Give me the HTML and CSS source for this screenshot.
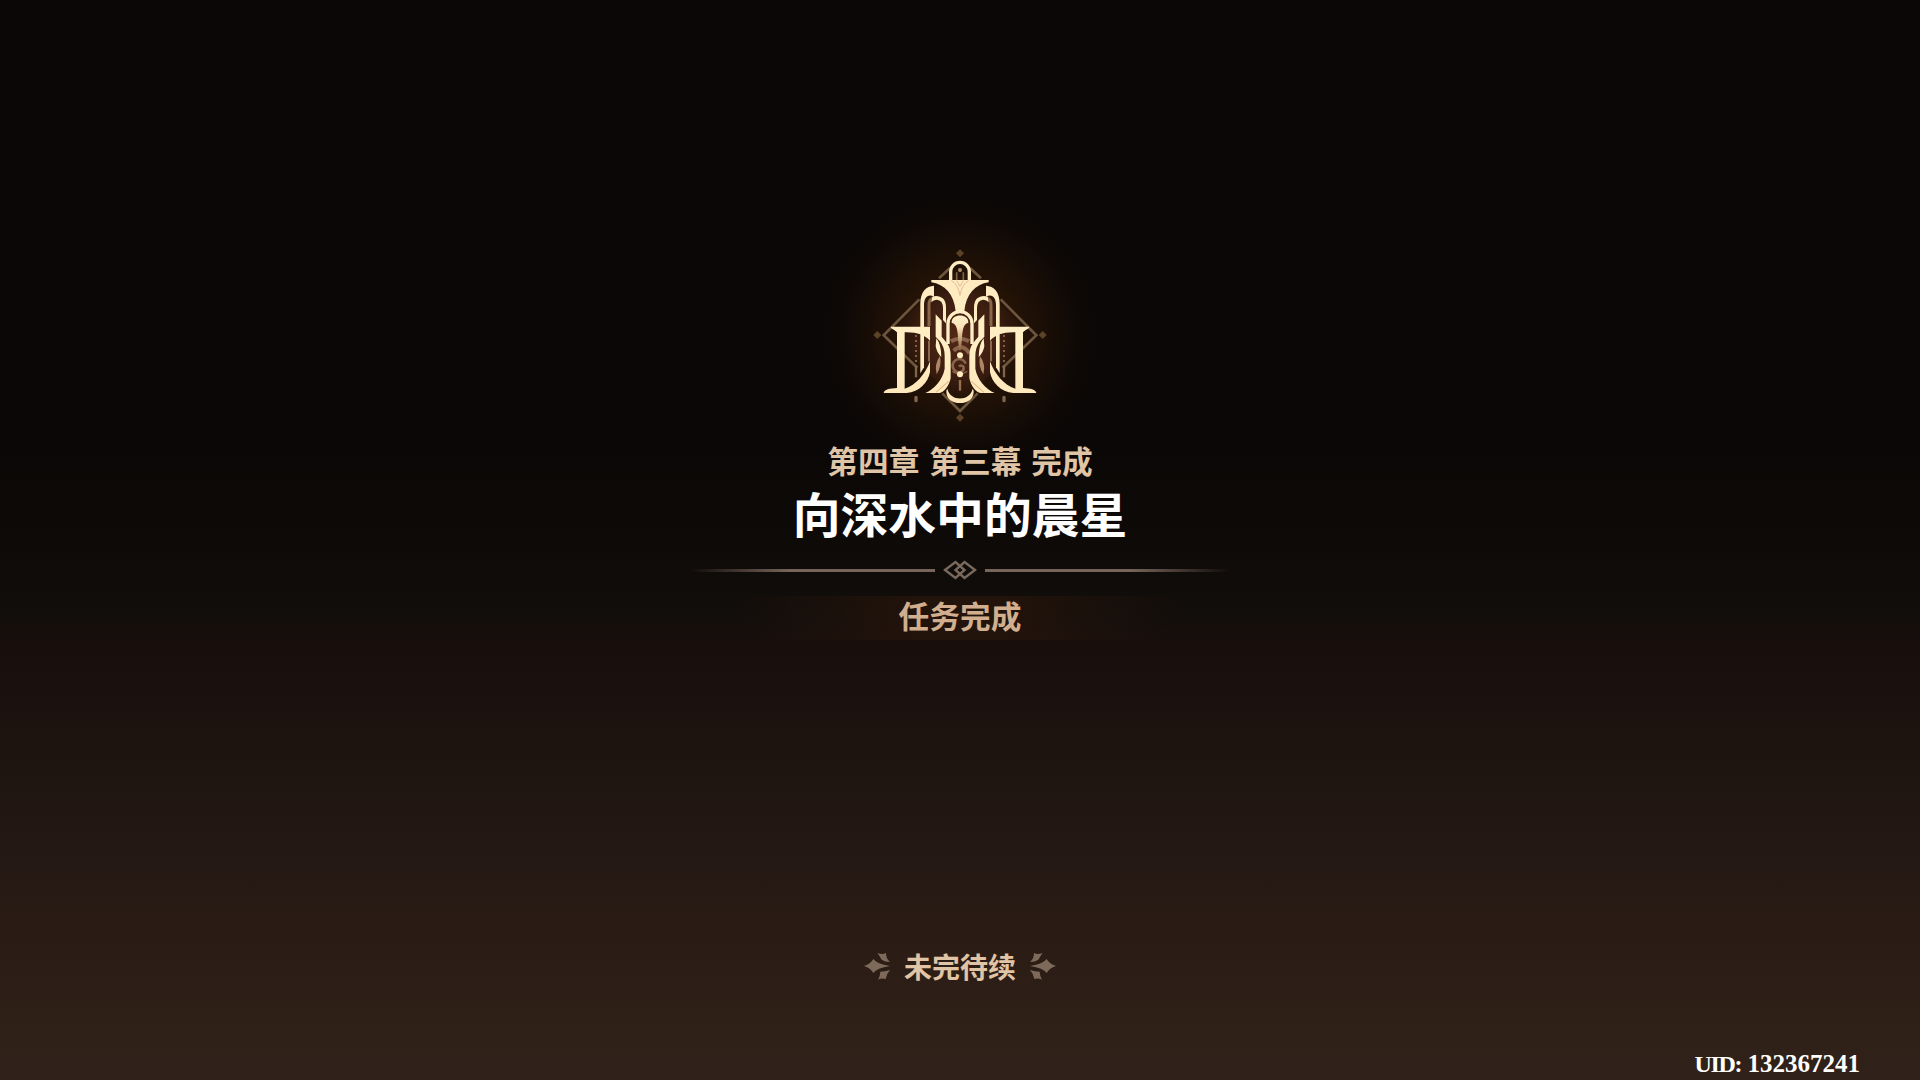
FILE: index.html
```
<!DOCTYPE html>
<html lang="zh-CN">
<head>
<meta charset="utf-8">
<title>任务完成</title>
<link rel="stylesheet" href="styles.css">
</head>
<body>
<main class="screen">
  <svg class="emblem" viewBox="0 0 600 570" aria-hidden="true">
    <defs>
      <linearGradient id="horn" x1="0" y1="0" x2="0" y2="1">
        <stop offset="0" stop-color="#ffefc6"/>
        <stop offset=".35" stop-color="#fbe2b8"/>
        <stop offset="1" stop-color="#8a6040"/>
      </linearGradient>
      <linearGradient id="gold" gradientUnits="userSpaceOnUse" x1="0" y1="60" x2="0" y2="490">
        <stop offset="0" stop-color="#ffe9bf"/>
        <stop offset=".6" stop-color="#ffefc4"/>
        <stop offset="1" stop-color="#ffe6b8"/>
      </linearGradient>
      <radialGradient id="core" gradientUnits="userSpaceOnUse" cx="300" cy="290" r="200">
        <stop offset="0" stop-color="#572a17"/>
        <stop offset=".6" stop-color="#3f1f12"/>
        <stop offset="1" stop-color="#2c170b" stop-opacity="0"/>
      </radialGradient>
      <g id="half">
        <path d="M92 260H210V302C192 284 172 276 134 277V446C168 436 196 402 210 364V396C204 428 178 456 140 459H71C73 448 88 445 111 444V277C105 268 94 268 92 260Z"/>
        <path d="M181 262V192C181 156 198 138 222 137V170C204 160 192 172 192 196V262Z"/>
        <path d="M181 272H192V382L181 400Z"/>
        <path d="M217 170Q232 164 247 174Q258 182 258 204V250L249 240V205Q249 180 230 179Q220 179 214 187Z"/>
        <path d="M227 223L245 242V290L260 308Q272 324 272 346V414C268 436 252 459 236 459H196C222 448 248 420 254 386V348Q254 322 240 304L227 290Z"/>
        <path d="M229 295Q243 312 244 351Q230 338 227 318Z"/>
      </g>
      <g id="half-dim">
        <path d="M207 258V194Q207 178 220 174" fill="none" stroke="#8a664a" stroke-width="9"/>
        <path d="M207 302V364" stroke="#8c684c" stroke-width="6"/>
        <path d="M240 348Q246 378 230 403Q222 372 240 348Z" fill="#ad8765"/>
        <path d="M168 285V366" stroke="#7d6049" stroke-width="6" stroke-dasharray="6 9"/>
        <path d="M168 376V412" stroke="#80654d" stroke-width="7"/>
        <path d="M168 472V482" stroke="#80654d" stroke-width="10" stroke-linecap="round"/>
      </g>
    </defs>
    <path d="M300 75L518 286L300 490L82 286Z" fill="url(#core)" opacity=".9"/>
    <path d="M270 84L237 115M178 178L71 286L172 383M247 460L300 513L353 460M428 383L529 286L422 178M330 84L363 115" fill="none" stroke="#6d543c" stroke-width="8"/>
    <path fill="#5c4327" d="M300 28L312 40L300 52L288 40ZM300 521L312 533L300 545L288 533ZM52 273L64 285L52 297L40 285ZM548 273L560 285L548 297L536 285Z"/>
    <use href="#half-dim"/>
    <use href="#half-dim" transform="matrix(-1 0 0 1 600 0)"/>
    <g fill="none" stroke="#8a644a" stroke-width="12">
      <path d="M273 304Q300 288 327 304"/>
      <path d="M281 332Q307 308 328 340"/>
      <path d="M317 371A20 20 0 1 0 300 397Q314 392 310 380Q303 373 297 380" stroke-width="8"/>
      <path d="M277 394Q300 410 322 394" stroke-width="4"/>
    </g>
    <g fill="url(#gold)">
      <use href="#half"/>
      <use href="#half" transform="matrix(-1 0 0 1 600 0)"/>
      <path d="M214 120H386V127C346 133 318 162 313 214H287C282 162 254 133 214 127Z"/>
      <path d="M262 446C270 485 330 485 338 446L341 452C342 476 324 489 300 489S258 476 259 452Z"/>
      <circle cx="300" cy="346" r="9"/><circle cx="300" cy="403" r="9"/>
    </g>
    <circle cx="300" cy="90" r="6" fill="#b18d6c"/>
    <path d="M272 122V95A28 28 0 0 1 328 95V122" fill="none" stroke="#ffecc3" stroke-width="10"/>
    <path d="M264 312V251A36 36 0 0 1 336 251V312" fill="none" stroke="#ffefc6" stroke-width="10"/>
    <path d="M290 97V120M310 97V120" stroke="#80604a" stroke-width="5"/>
    <path d="M274 122Q294 132 300 166Q306 132 326 122M290 122L300 139L310 122" fill="none" stroke="#e7bd94" stroke-width="3"/>
    <path d="M275 248C273 219 327 219 325 248Q310 250 307 280L303 331H297L293 280Q290 250 275 248Z" fill="url(#horn)"/>
    <path d="M300 420V452" stroke="#94704f" stroke-width="7"/>
    <path d="M266 424L228 457M334 424L372 457" stroke="#d9ad7e" stroke-width="3"/>
  </svg>

  <p class="chapter">第四章 第三幕 完成</p>
  <h1 class="title">向深水中的晨星</h1>

  <div class="divider">
    <span class="rule rule-left"></span>
    <svg class="knot" viewBox="0 0 34 20" aria-hidden="true">
      <path d="M2 10L12.5 2L21.5 10L12.5 18ZM32 10L21.5 2L12.5 10L21.5 18Z"/>
    </svg>
    <span class="rule rule-right"></span>
  </div>

  <p class="status">任务完成</p>

  <div class="continued">
    <svg class="spark" viewBox="0 0 78 84" aria-hidden="true">
      <path d="M0 42Q20 36 28 21Q38 36 78 42Q38 48 28 63Q20 48 0 42ZM40 3Q55 9 66 3Q65 18 78 30Q62 30 53 23Q48 14 40 3ZM42 83Q49 70 49 59Q64 59 78 54Q67 66 65 81Q53 77 42 83Z"/>
    </svg>
    <span>未完待续</span>
    <svg class="spark spark-flipped" viewBox="0 0 78 84" aria-hidden="true">
      <path d="M0 42Q20 36 28 21Q38 36 78 42Q38 48 28 63Q20 48 0 42ZM40 3Q55 9 66 3Q65 18 78 30Q62 30 53 23Q48 14 40 3ZM42 83Q49 70 49 59Q64 59 78 54Q67 66 65 81Q53 77 42 83Z"/>
    </svg>
  </div>

  <footer class="uid"><span class="uid-label">UID:</span> <span>132367241</span></footer>
</main>
</body>
</html>
```
FILE: styles.css
```
* { box-sizing: border-box; margin: 0; padding: 0; }

body { background: #0a0706; }

.screen {
  width: 1920px;
  height: 1080px;
  padding-top: 240px;
  overflow: hidden;
  display: flex;
  flex-direction: column;
  align-items: center;
  font-family: "Noto Sans CJK SC", "Noto Sans", sans-serif;
  font-weight: 700;
  color: #e0c4a6;
  background:
    radial-gradient(circle 142px at 960px 335px, #2b1707 0, #241306 40%, rgba(28, 15, 6, .75) 65%, rgba(18, 10, 6, .4) 85%, transparent 100%),
    linear-gradient(#0a0706 0, #0a0706 440px, #0e0a08 540px, #120e0b 620px, #180e0d 645px, #1d140f 744px, #241814 850px, #2a1c14 930px, #2f2018 1040px, #30221a 1080px);
}

.emblem { width: 200px; height: 190px; display: block; }

.chapter {
  margin-top: 7px;
  height: 45px;
  line-height: 45px;
  font-size: 30.7px;
  word-spacing: 3px;
}

.title {
  margin-top: -1px;
  height: 64px;
  line-height: 64px;
  font-size: 47.8px;
  color: #fff;
}

.divider {
  margin-top: 15px;
  height: 20px;
  display: flex;
  align-items: center;
  gap: 8px;
}

.rule { width: 250px; height: 3px; }
.rule-left { background: linear-gradient(90deg, transparent 2%, #78655a 42%); }
.rule-right { background: linear-gradient(270deg, transparent 2%, #78655a 42%); }

.knot { width: 34px; height: 20px; fill: none; stroke: #79685c; stroke-width: 2.4; }

.status {
  margin-top: 16px;
  width: 440px;
  height: 44px;
  line-height: 38px;
  text-align: center;
  font-size: 30.7px;
  color: #d0ae8e;
  background: linear-gradient(90deg, transparent, #22130b 40%, #22130b 60%, transparent);
}

.continued {
  margin-top: 306px;
  height: 40px;
  display: flex;
  align-items: center;
  gap: 14px;
  font-size: 28px;
  line-height: 38px;
}

.spark { width: 26px; height: 28px; fill: #7e6a5b; }
.spark-flipped { transform: scaleX(-1); }

.uid {
  align-self: flex-end;
  margin: 62px 60px 0 0;
  height: 32px;
  line-height: 32px;
  font-family: "Liberation Serif", serif;
  font-size: 25px;
  color: #fff;
}

.uid-label { font-size: 24px; letter-spacing: -1.3px; }
```
